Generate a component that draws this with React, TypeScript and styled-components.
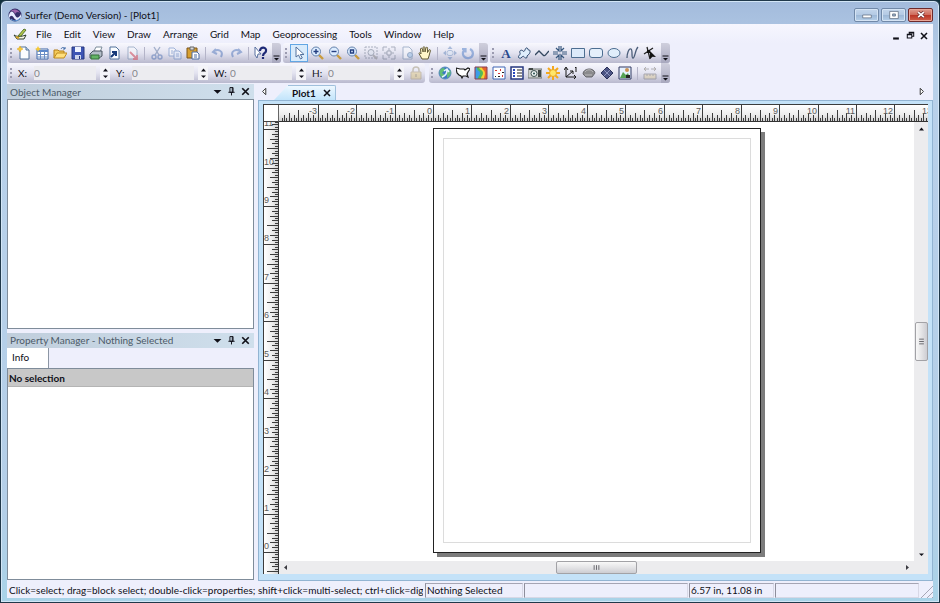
import React from "react";
import styled, { createGlobalStyle, css } from "styled-components";

const Global = createGlobalStyle`
  * { box-sizing: border-box; }
  html, body, #root { height: 100%; }
  body { margin: 0; overflow: hidden; background: #10303c; }
  body, button, input { font-family: Lato, "Open Sans", sans-serif; font-size: 10px; color: #101018; }
  button { border: 0; padding: 0; margin: 0; background: none; }
  svg { display: block; flex: none; }
`;

const Frame = styled.div`
  height: 100vh;
  display: flex;
  flex-direction: column;
  padding: 0 6px 4px;
  border: 1px solid #20384a;
  border-radius: 6px 6px 0 0;
  background: linear-gradient(#a3bbdc, #b9d1ea 70px, #b4cfe8 85%, #a9d3e8);
  box-shadow: inset 0 0 0 1px #d3e6f6;
`;
const TitleBar = styled.header`
  height: 23px;
  flex: none;
  display: flex;
  align-items: center;
  gap: 3px;
  padding: 5px 0 0 1px;
`;
const Title = styled.h1`
  margin: 0;
  flex: 1;
  font-size: 10px;
  line-height: 14px;
  font-weight: 400;
`;
const WindowButtons = styled.div`
  display: flex;
  gap: 2px;
`;
const WindowButton = styled.button<{ $close?: boolean }>`
  width: 25px;
  height: 14px;
  display: grid;
  place-items: center;
  border: 1px solid ${(p) => (p.$close ? "#6d2a2c" : "#7189a8")};
  border-radius: 2px;
  box-shadow: inset 0 0 0 1px ${(p) => (p.$close ? "#e9a799" : "#d5e4f4")};
  background: ${(p) =>
    p.$close
      ? "linear-gradient(#dd9c90, #cf6b5b 48%, #b93325 50%, #d0604a)"
      : "linear-gradient(#c3d6ec, #b4cae4 48%, #9cb7d6 50%, #b6d0ea)"};
`;
const Client = styled.div`
  flex: 1;
  min-height: 0;
  display: flex;
  flex-direction: column;
  background: #eeeffc;
`;
const MenuBar = styled.nav`
  height: 19px;
  flex: none;
  display: flex;
  align-items: center;
  padding: 0 3px 0 6px;
  background: linear-gradient(#f6f6fe, #eeeffc);
`;
const MenuList = styled.div`
  flex: 1;
  display: flex;
  gap: 12px;
  margin-left: 9px;
`;
const MenuItem = styled.button`
  line-height: 16px;
`;
const MdiButtons = styled.div`
  display: flex;
  gap: 2px;
  padding-top: 4px;
`;
const MdiButton = styled.button`
  width: 12px;
  height: 12px;
  display: grid;
  place-items: center;
`;

const ToolRow = styled.div<{ $gap: number }>`
  display: flex;
  flex: none;
  height: 20px;
  gap: ${(p) => p.$gap}px;
  padding-left: 1px;
`;
const ToolGroup = styled.div`
  display: flex;
  align-items: center;
  height: 20px;
  padding-left: 1px;
  border-radius: 3px;
  background: linear-gradient(#f8f8fe, #e3e3f0 50%, #b9b9ce);
`;
const Grip = styled.span`
  width: 6px;
  height: 12px;
  flex: none;
  background: radial-gradient(circle, #9b9bb0 1px, transparent 1px) 0 0 / 4px 4px repeat-y;
`;
const ToolButton = styled.button<{ $active?: boolean; $faded?: boolean }>`
  width: 18px;
  height: 18px;
  flex: none;
  display: grid;
  place-items: center;
  ${(p) => p.$active && css`background: #d9ebfb; box-shadow: inset 0 0 0 1px #62a6e4;`}
  svg { opacity: ${(p) => (p.$faded ? 0.45 : 1)}; }
`;
const Divider = styled.span`
  width: 1px;
  height: 13px;
  margin: 0 3px;
  flex: none;
  background: #b4b4c8;
`;
const Overflow = styled.button`
  width: 9px;
  height: 20px;
  margin-left: 2px;
  flex: none;
  display: flex;
  align-items: flex-end;
  justify-content: center;
  padding-bottom: 2px;
  border-radius: 0 3px 3px 0;
  background: linear-gradient(#cfcfdd, #a8a8be);
`;
const Coord = styled.label`
  display: flex;
  align-items: center;
  width: 98px;
  gap: 4px;
  padding: 0 3px;
  line-height: 14px;
`;
const CoordName = styled.span`
  width: 12px;
  flex: none;
`;
const CoordInput = styled.input`
  flex: 1;
  min-width: 0;
  height: 14px;
  border: 0;
  padding: 0;
  color: #84848c;
  background: #ececf0;
`;
const Spinner = styled.span`
  width: 10px;
  height: 14px;
  flex: none;
  display: flex;
  flex-direction: column;
  background: #f4f4f8;
`;
const SpinButton = styled.button`
  height: 7px;
  display: grid;
  place-items: center;
`;

const Workspace = styled.div`
  flex: 1;
  min-height: 0;
  display: grid;
  grid-template-columns: 247px minmax(0, 1fr);
  gap: 4px;
`;
const Sidebar = styled.aside`
  display: flex;
  flex-direction: column;
  gap: 4px;
  min-height: 0;
  padding: 1px 0;
`;
const Panel = styled.section<{ $grow: number }>`
  flex: ${(p) => p.$grow} 1 0;
  min-height: 0;
  display: flex;
  flex-direction: column;
`;
const PanelHeader = styled.div`
  height: 15px;
  flex: none;
  display: flex;
  align-items: center;
  padding: 0 2px 0 3px;
  background: linear-gradient(90deg, #c0cedc, #cfdfec);
`;
const PanelTitle = styled.h2`
  margin: 0;
  flex: 1;
  font-size: 10px;
  line-height: 14px;
  font-weight: 400;
  color: #4c5a68;
`;
const PanelButton = styled.button`
  width: 14px;
  height: 14px;
  display: grid;
  place-items: center;
`;
const PanelBody = styled.div`
  flex: 1;
  min-height: 0;
  background: #fff;
  border: 1px solid #7f8c9a;
`;
const PanelTabs = styled.div`
  height: 20px;
  flex: none;
  display: flex;
`;
const PanelTab = styled.button`
  width: 42px;
  padding: 0 0 1px 5px;
  text-align: left;
  background: #fff;
  border-right: 1px solid #8c96a4;
`;
const Selection = styled.p`
  margin: 0;
  height: 18px;
  padding-left: 1px;
  line-height: 18px;
  font-weight: 700;
  background: #c8c8c8;
  border-bottom: 1px solid #b4b4b4;
`;

const Documents = styled.main`
  min-width: 0;
  min-height: 0;
  display: flex;
  flex-direction: column;
`;
const TabStrip = styled.div`
  height: 17px;
  flex: none;
  display: flex;
  align-items: flex-end;
  justify-content: space-between;
  padding: 0 7px 0 2px;
`;
const TabGroup = styled.div`
  display: flex;
  align-items: flex-end;
  gap: 5px;
`;
const StripButton = styled.button`
  width: 9px;
  height: 17px;
  display: grid;
  place-items: center;
`;
const DocTab = styled.div`
  height: 15px;
  display: flex;
  align-items: center;
  gap: 4px;
  padding: 0 1px 0 4px;
  border-top: 1px solid #9fc0dc;
  border-right: 1px solid #9fc0dc;
  border-radius: 0 2px 0 0;
  background: linear-gradient(#eef8ff, #c2e4fb);
`;
const TabSlope = styled.span`
  width: 14px;
  height: 15px;
  margin-right: -5px;
  background: linear-gradient(#eef8ff, #c2e4fb);
  clip-path: polygon(100% 0, 100% 100%, 0 100%);
`;
const TabLabel = styled.button`
  font-weight: 700;
  line-height: 13px;
`;
const DocFrame = styled.div`
  flex: 1;
  min-height: 0;
  display: flex;
  padding: 3px 4px 6px;
  border: 1px solid #92b4d2;
  background: #c4e2f8;
`;
const Plot = styled.div`
  flex: 1;
  min-width: 0;
  display: grid;
  grid-template: 17px minmax(0, 1fr) 13px / 15px minmax(0, 1fr) 14px;
  border-top: 1px solid #3c3c3c;
  border-left: 1px solid #3c3c3c;
  background: #fff;
`;
const Corner = styled.div`
  border-right: 1px solid #666;
  border-bottom: 1px solid #444;
`;
const TopRuler = styled.div`
  grid-column: 2 / 4;
  overflow: hidden;
  background: linear-gradient(#fff, #ededed 60%, #d0d0d0);
  border-bottom: 1px solid #333;
`;
const SideRuler = styled.div`
  grid-row: 2 / 4;
  overflow: hidden;
  background: linear-gradient(90deg, #fff, #ededed 60%, #d0d0d0);
  border-right: 1px solid #333;
`;
const RulerArt = styled.svg`
  font: 9px "Liberation Sans", Arial, sans-serif;
  fill: #3c3c3c;
  text { fill: #5a5a5a; }
`;
const Canvas = styled.div`
  display: flex;
  justify-content: center;
  align-items: flex-start;
  overflow: hidden;
  padding-top: 6px;
`;
const Sheet = styled.div`
  width: 328px;
  height: 425px;
  flex: none;
  padding: 9px;
  border: 1px solid #222;
  background: #fff;
  box-shadow: 4px 4px 0 #7c7c7c;
`;
const Margins = styled.div`
  height: 100%;
  border: 1px solid #dcdcdc;
`;
const ScrollBar = styled.div<{ $horizontal?: boolean }>`
  display: flex;
  flex-direction: ${(p) => (p.$horizontal ? "row" : "column")};
  align-items: center;
  justify-content: space-between;
  background: #ececee;
`;
const ScrollEnd = styled.button`
  width: 13px;
  height: 13px;
  display: grid;
  place-items: center;
`;
const Thumb = styled.button<{ $horizontal?: boolean }>`
  width: ${(p) => (p.$horizontal ? 81 : 13)}px;
  height: ${(p) => (p.$horizontal ? 13 : 39)}px;
  display: grid;
  place-items: center;
  border: 1px solid #a2a2a6;
  border-radius: 2px;
  background: linear-gradient(${(p) => (p.$horizontal ? "180deg" : "90deg")}, #f8f8f8, #e4e4e6 50%, #cdcdd2);
`;

const StatusBar = styled.footer`
  height: 17px;
  flex: none;
  display: grid;
  grid-template-columns: 417px 98px minmax(0, 1fr) 85px 144px 13px;
  gap: 1px;
  padding-top: 2px;
`;
const StatusCell = styled.div<{ $plain?: boolean }>`
  padding-left: 1px;
  line-height: 13px;
  white-space: nowrap;
  overflow: hidden;
  border: 1px solid transparent;
  ${(p) => !p.$plain && css`border-color: #a5a5b4 #d8d8e6 #d8d8e6 #8e8e9c;`}
`;
const SizeGrip = styled.div`
  background: repeating-linear-gradient(135deg, transparent 0 3px, #a6a6b6 3px 4px);
  clip-path: polygon(100% 0, 100% 100%, 0 100%);
`;

const paper = <path d="M3 1h6l3 3v9H3z" fill="#fbfdff" stroke="#52739a" />;
const lens = (mark: React.ReactNode) => (
  <>
    <path d="m9 9 4 4" stroke="#c99b3d" strokeWidth="2.4" />
    <circle cx="6" cy="5.5" r="4.5" fill="#dcecff" stroke="#6482ab" />
    <g stroke="#243f80" strokeWidth="1.4" fill="none">{mark}</g>
  </>
);

const art: Record<string, React.ReactNode> = {
  new: <>{paper}<path d="M9 1v3h3" fill="#c7daf0" stroke="#52739a" /><path d="m3 0 1 2 2 1-2 1-1 2-1-2-2-1 2-1z" fill="#f6c936" stroke="#e2a51a" strokeWidth=".5" /></>,
  sheet: <><path d="M2 3h11v10H2z" fill="#fff" stroke="#3e66a8" /><path d="M2 4h11v2H2z" fill="#5b87cb" /><path d="M2 8.500h11M2 11h11M5.500 5v8M9.500 5v8" stroke="#6a8dc4" /><path d="m3 0 1 2 2 1-2 1-1 2-1-2-2-1 2-1z" fill="#f6c936" /></>,
  open: <><path d="M1 12V4h4l1 1h5v3" fill="#f4cb5a" stroke="#b47f17" /><path d="m1 12 3-5h10l-3 5z" fill="#ffdf7c" stroke="#c08b1d" /><path d="M8 3c1-2 3-2 4 0m0-2v2h-2" stroke="#3c68a6" fill="none" /></>,
  save: <><path d="M1 1h12v12H1z" fill="#3d55b4" stroke="#26377f" /><path d="M4 1h6v5H4z" fill="#eef3ff" /><path d="M4 9h6v4H4z" fill="#cdd5ec" /><path d="M8 10h1v3H8z" fill="#26377f" /></>,
  print: <><path d="m5 5 2-4h6l-2 5z" fill="#fff" stroke="#7b8b99" /><path d="M1 8 4 5h9v5l-3 2H1z" fill="#b3bec8" stroke="#4a5560" /><path d="M2 9h8v4H2z" fill="#63b465" stroke="#34703a" /></>,
  export: <>{paper}<path d="M4 11 9 6m-4 0h4v4" stroke="#173a78" strokeWidth="2" fill="none" /></>,
  drop: <>{paper}<path d="m5 6 7 7m0-4v4H8" stroke="#d42f3d" strokeWidth="1.800" fill="none" /></>,
  cut: <><path d="M4 1 9 9M10 1 5 9" stroke="#4a6797" strokeWidth="1.400" /><circle cx="4" cy="11" r="2" fill="none" stroke="#3f66ad" strokeWidth="1.400" /><circle cx="10" cy="11" r="2" fill="none" stroke="#3f66ad" strokeWidth="1.400" /></>,
  copy: <><path d="M1 2h5l2 2v6H1z" fill="#fff" stroke="#4470b6" /><path d="M6 5h5l2 2v6H6z" fill="#e5efff" stroke="#4470b6" /><path d="M8 8h3M8 10h3M3 5h2M3 7h2" stroke="#4470b6" /></>,
  paste: <><path d="M1 2h10v10H1z" fill="#d8a030" stroke="#7c5518" /><path d="M4 1h4v3H4z" fill="#d8d8d8" stroke="#666" /><path d="M6 6h5l2 2v5H6z" fill="#fff" stroke="#4c6da3" /><path d="M8 9h3M8 11h3" stroke="#4c6da3" /></>,
  undo: <path d="M5 3 2 6l4 2M2 6c5-4 11-1 8 5" stroke="#3e68b4" strokeWidth="2" fill="none" />,
  redo: <path d="m9 3 3 3-4 2m4-2C7 2 1 5 4 11" stroke="#3e68b4" strokeWidth="2" fill="none" />,
  help: <><path d="m1 1 6 7H4l-1 4-2-3z" fill="#fff" stroke="#5870a0" /><path d="M6 5c0-5 7-4 6 0 0 2-3 2-3 5m0 1v2" stroke="#1d2976" strokeWidth="2.200" fill="none" /></>,
  arrow: <path d="M4 1v10l2.500-2 2 4 1.800-1-2-3.500H12z" fill="#fff" stroke="#52709c" />,
  zoomIn: lens(<path d="M3.500 5.500h5M6 3v5" />),
  zoomOut: lens(<path d="M3.500 5.500h5" />),
  zoomFit: lens(<path d="M4.500 4h3v3h-3z" />),
  zoomSel: <><path d="M1 1h12v11H1z" fill="none" stroke="#586478" strokeDasharray="2 1" /><path d="m9 9 4 4" stroke="#777" strokeWidth="2" /><circle cx="7" cy="6.500" r="3" fill="#d9e1ec" stroke="#586478" /></>,
  zoomRect: <path d="M1 5V1h4M9 1h4v4M13 9v4H9M5 13H1V9M7 2v3M7 9v3M2 7h3m4 0h3M5 5h4v4H5z" fill="none" stroke="#586478" />,
  zoomPage: <>{paper}<circle cx="10" cy="9" r="2.500" fill="#8fbde8" stroke="#3d6896" /></>,
  hand: <path d="M4 13 1 7.500c0-1 1-1 2 .500L2.500 3c0-1 1.500-1 2 0l.6 3V1.500c0-1 1.700-1 1.800 0L7 6l1-4.200c.3-1 1.800-.6 1.600.4L9.500 6.500 11 4c.6-.8 1.800-.2 1.400.8L11 10l-1 3z" fill="#fff6c9" stroke="#625a34" />,
  move: <><path d="m7 0 2.500 3h-5zM7 14l2.500-3h-5zM0 7l3-2.500v5zM14 7l-3-2.500v5z" fill="#587eb6" /><rect x="4" y="4.500" width="6" height="5" rx="2" fill="#d9e6f5" stroke="#6a8cbd" /></>,
  rotate: <path d="M3 4c-3 5 1 9 5 8 5-1 5-7 1-9M1 3h3.500v3.500" stroke="#3d71c2" strokeWidth="2.200" fill="none" />,
  text: <text x="7" y="12" textAnchor="middle" fontFamily="Liberation Serif, serif" fontWeight="700" fontSize="13" fill="#29488c">A</text>,
  polygon: <path d="M2 12c-2-2 2-3 1-5s1-4 3-2 2-4 4-3 0 2 2 2 1 4-1 5 0 3-2 3-2-3-4-1-2 1-3 1z" fill="#dfeefc" stroke="#2a456c" />,
  polyline: <path d="m0 9 4-4 4 4c2 2 3-1 6-4" stroke="#33475f" strokeWidth="1.300" fill="none" />,
  symbol: <path d="M6 0v5L3 2M8 0v5l3-3M6 14V9l-3 3M8 14V9l3 3M0 6h5M0 8h5M9 6h5M9 8h5" stroke="#38587e" strokeWidth="1.200" fill="none" />,
  rect: <path d="M.5 2.500h13v9H.5z" fill="#dceafa" stroke="#4d6e91" />,
  rounded: <rect x=".5" y="2.500" width="13" height="9" rx="2.500" fill="#e4effb" stroke="#4d6e91" />,
  ellipse: <ellipse cx="7" cy="7" rx="6" ry="4.500" fill="#e0eefb" stroke="#4d6e91" />,
  spline: <path d="M2 12c0-5 2-10 4-9s0 9 2 9 2-8 5-11" stroke="#4b5d79" strokeWidth="1.300" fill="none" />,
  reshape: <><path d="M1 8 10 2M4 1l3 12" stroke="#222" strokeWidth="1.300" /><path d="M4 4h3v3H4z" fill="#111" /><path d="m7 5 6 6-3.500-.3L7 13z" fill="#111" /></>,
  lock: <><path d="M4 7V4c0-4 6-4 6 0v3" stroke="#988d6a" strokeWidth="1.500" fill="none" /><path d="M2 6h10v7H2z" fill="#e2c877" stroke="#a6936a" /><path d="M7 8v3" stroke="#70603a" /></>,
  globe: <><circle cx="7" cy="7" r="6" fill="#3a78c4" stroke="#5a8cbe" /><path d="M2 4c3-3 5-2 5 0L4 7l3 2-2 3C2 11 1 7 2 4zM9 5l3-1c2 4-1 7-3 8z" fill="#61bd77" /><path d="M4 11c3-1 5-4 5-7M6 5l3-2 2 3" stroke="#e5f5ff" fill="none" strokeWidth="1.500" /></>,
  base: <path d="m0 2 4 1h4l1 1 3-2 2 1-2 3-1 2 1 3-2-1-3 0-1 2-1-2-2-1-2-2z" fill="#fff" stroke="#181818" strokeWidth="1.200" />,
  contour: <><path d="M1 1h12v12H1z" fill="#3c9ce8" /><path d="M3 1c0 5 3 3 3 6s-2 3-2 6h9V1z" fill="#54b85a" /><path d="M5 1c0 3 4 3 4 6s-2 3-2 6h6V1z" fill="#f5d232" /><path d="M8 1c0 3 3 3 3 6s-1 3-1 6h3V1z" fill="#e8642c" /><path d="M1 1h12v12H1z" fill="none" stroke="#8a3c50" /></>,
  post: <><path d="M1 1h12v12H1z" fill="#fff" stroke="#3f64b4" /><path d="M3 4h2v1H3zM8 3h1v2H8zM6 7h2v1H6zM10 9h1v2h-1z" fill="#d83434" /><path d="M3 10h1v1H3zM10 6h2v1h-2zM6 10h2v1H6z" fill="#222" /></>,
  legend: <><path d="M1 1h12v12H1z" fill="#fff" stroke="#26377f" strokeWidth="1.500" /><path d="M3 3h2v2H3zM3 6h2v2H3zM3 9h2v2H3z" fill="#2746be" /><path d="M7 4h5M7 7h5M7 10h5" stroke="#222" /></>,
  camera: <><path d="M0 3h14v9H0z" fill="#ced1cf" stroke="#717675" /><path d="M1 2h4v2H1zM10 4h3v7h-3z" fill="#414846" /><circle cx="6" cy="7.500" r="3" fill="#eef4f2" stroke="#3d5150" /><circle cx="6" cy="7.500" r="1" fill="#27504d" /></>,
  relief: <><path d="M7 0v14M0 7h14M2 2l10 10M12 2 2 12" stroke="#f5a91d" strokeWidth="2" /><circle cx="7" cy="7" r="3.500" fill="#ffe66a" stroke="#eaa51e" /></>,
  vector: <path d="M2 2v9h10M0 4l2-3 2 3M10 9l2 2-2 2M2 11l7-6M6 5h3v3M11 2l1-1v5" stroke="#181818" fill="none" />,
  surface: <><path d="M1 8c0-6 11-7 12-1l-3 4H4z" fill="#8b8b8d" stroke="#68686e" /><path d="M3 6c2-3 6-3 8 0M3 9h7" stroke="#b8b8ba" fill="none" /></>,
  wireframe: <><path d="m7 1 6 6-6 6-6-6z" fill="#4c5484" stroke="#2a3158" /><path d="m4 4 6 6M10 4l-6 6" stroke="#8e96c0" /></>,
  image: <><path d="M1 1h12v12H1z" fill="#e6f1fd" stroke="#333b62" /><path d="m2 12 3-6 3 3 2-2 2 5z" fill="#55a255" /><circle cx="9" cy="4" r="2" fill="#ca9256" /><path d="M8 9h4v3H8z" fill="#252525" /></>,
  scale: <path d="M1 3h5M8 3h5M3 1 1 3l2 2M11 1l2 2-2 2M1 8h12v5H1zM4 8v2M7 8v2M10 8v2" fill="#e2cf9c" stroke="#69696d" />,
  logo: <><circle cx="7" cy="7" r="6.500" fill="#352f69" /><path d="M1 7c2-5 4-4 6 0s4 3 6-1v3c-2 4-5 4-7 1S3 7 1 10z" fill="#e7ebff" /><path d="M2 4c3-4 8-3 10 1-2-2-4-1-5 1-1-3-3-4-5-2z" fill="#9c63aa" /><path d="M3 11c3 3 7 2 9-1" stroke="#5fa0de" fill="none" /></>,
  plot: <><path d="M1 8c4 2 6 2 12 0l-2 4H4z" fill="#f6f6e6" stroke="#2d3b2c" /><path d="m5 9 6-7 2 1-5 6z" fill="#b5c94a" stroke="#58752e" /><path d="m3 10 3 1" stroke="#d7a52c" strokeWidth="2" /></>,
  close: <path d="m3.500 3.500 7 7m0-7-7 7" stroke="#101018" strokeWidth="1.800" />,
  pin: <path d="M5 2h4v6H5zM3 8h8M7 8v4M8 2v6" stroke="#101018" strokeWidth="1.200" fill="none" />,
  down: <path d="M2 5h10L7 10z" fill="#101018" />,
  minimize: <path d="M3 10.500h8" stroke="#101018" strokeWidth="3" />,
  restore: <path d="M5 5V2h7v6H9M5 3h7M2 5h7v6H2zM2 6h7" fill="none" stroke="#101018" strokeWidth="1.600" />,
  left: <path d="M9 2v10L4 7z" fill="#fff" stroke="#333" strokeWidth="1.500" />,
  right: <path d="M5 2v10l5-5z" fill="#fff" stroke="#333" strokeWidth="1.500" />,
  overflow: <path d="M1 3h12v2H1zM2 8h10l-5 5z" fill="#101018" />,
  up: <path d="M2 11h10L7 5z" fill="#101018" />,
  scrollLeft: <path d="M10 2v10L4 7z" fill="#3a3a40" />,
  scrollRight: <path d="M4 2v10l6-5z" fill="#3a3a40" />,
  winMin: <path d="M1 7h12v4H1z" fill="#fff" stroke="#59677b" />,
  winMax: <><path d="M1 2h12v10H1z" fill="#fff" stroke="#59677b" /><path d="M5 5.500h4v3H5z" fill="#9db4cf" stroke="#59677b" /></>,
  winClose: <><path d="m3 3 8 7m0-7-8 7" stroke="#5a2427" strokeWidth="4" /><path d="m3 3 8 7m0-7-8 7" stroke="#fff" strokeWidth="2.400" /></>,
  bars: <path d="M4 4v6M7 4v6M10 4v6" stroke="#4a4a50" />,
  rows: <path d="M4 4h6M4 7h6M4 10h6" stroke="#4a4a50" />,
};

function Icon({ name, size = 14 }: { name: string; size?: number }) {
  return <svg width={size} height={size} viewBox="0 0 14 14" aria-hidden="true">{art[name]}</svg>;
}

type Tools = { tools: string[]; faded?: string[]; active?: string };

function ToolSet({ tools, faded = [], active }: Tools) {
  return (
    <>
      {tools.map((name, i) =>
        name === "|" ? (
          <Divider key={i} />
        ) : (
          <ToolButton key={i} aria-label={name} $active={name === active} $faded={faded.includes(name)}>
            <Icon name={name} />
          </ToolButton>
        )
      )}
    </>
  );
}

function Toolbar(props: Tools) {
  return (
    <ToolGroup role="toolbar">
      <Grip />
      <ToolSet {...props} />
      <Overflow aria-label="Toolbar options"><Icon name="overflow" size={7} /></Overflow>
    </ToolGroup>
  );
}

function CoordField({ name }: { name: string }) {
  return (
    <Coord>
      <CoordName>{name}:</CoordName>
      <CoordInput defaultValue="0" />
      <Spinner>
        <SpinButton type="button" aria-label={`Increase ${name}`}><Icon name="up" size={7} /></SpinButton>
        <SpinButton type="button" aria-label={`Decrease ${name}`}><Icon name="down" size={7} /></SpinButton>
      </Spinner>
    </Coord>
  );
}

const INCH = 38.45;
const TICKS = 16;
const ORIGIN_X = 154;
const ORIGIN_Y = 430;

function tickLength(step: number) {
  if (step % 16 === 0) return 16;
  if (step % 8 === 0) return 11;
  if (step % 4 === 0) return 8;
  return step % 2 === 0 ? 6 : 3;
}
const range = (from: number, to: number) => Array.from({ length: to - from + 1 }, (_, i) => from + i);

function HorizontalRuler() {
  return (
    <RulerArt width="100%" height="16">
      {range(-63, 640).map((s) => (
        <rect key={s} x={Math.round(ORIGIN_X + (s * INCH) / TICKS)} y={16 - tickLength(s)} width="1" height={tickLength(s)} />
      ))}
      {range(-3, 13).map((n) => (
        <text key={n} x={Math.round(ORIGIN_X + n * INCH) - 1} y="9" textAnchor="end">{n}</text>
      ))}
    </RulerArt>
  );
}

function VerticalRuler() {
  return (
    <RulerArt width="14" height="100%">
      {range(-160, 179).map((s) => (
        <rect key={s} x={14 - tickLength(s)} y={Math.round(ORIGIN_Y - (s * INCH) / TICKS)} width={tickLength(s)} height="1" />
      ))}
      {range(0, 11).map((n) => (
        <text key={n} x="0" y={Math.round(ORIGIN_Y - n * INCH) - 3}>{n}</text>
      ))}
    </RulerArt>
  );
}

function PanelHead({ title }: { title: string }) {
  return (
    <PanelHeader>
      <PanelTitle>{title}</PanelTitle>
      <PanelButton aria-label="Panel menu"><Icon name="down" size={11} /></PanelButton>
      <PanelButton aria-label="Auto hide"><Icon name="pin" size={11} /></PanelButton>
      <PanelButton aria-label="Close panel"><Icon name="close" size={13} /></PanelButton>
    </PanelHeader>
  );
}

const menus = ["File", "Edit", "View", "Draw", "Arrange", "Grid", "Map", "Geoprocessing", "Tools", "Window", "Help"];

export default function App() {
  return (
    <>
      <Global />
      <Frame>
        <TitleBar>
          <Icon name="logo" />
          <Title>Surfer (Demo Version) - [Plot1]</Title>
          <WindowButtons>
            <WindowButton aria-label="Minimize"><Icon name="winMin" size={10} /></WindowButton>
            <WindowButton aria-label="Restore"><Icon name="winMax" size={10} /></WindowButton>
            <WindowButton aria-label="Close" $close><Icon name="winClose" size={10} /></WindowButton>
          </WindowButtons>
        </TitleBar>
        <Client>
          <MenuBar>
            <Icon name="plot" />
            <MenuList>
              {menus.map((m) => <MenuItem key={m}>{m}</MenuItem>)}
            </MenuList>
            <MdiButtons>
              <MdiButton aria-label="Minimize document"><Icon name="minimize" size={10} /></MdiButton>
              <MdiButton aria-label="Restore document"><Icon name="restore" size={9} /></MdiButton>
              <MdiButton aria-label="Close document"><Icon name="close" size={12} /></MdiButton>
            </MdiButtons>
          </MenuBar>
          <ToolRow $gap={2}>
            <Toolbar
              tools={["new", "sheet", "open", "save", "print", "export", "drop", "|", "cut", "copy", "paste", "|", "undo", "redo", "|", "help"]}
              faded={["drop", "cut", "copy", "undo", "redo"]}
            />
            <Toolbar
              tools={["arrow", "zoomIn", "zoomOut", "zoomFit", "zoomSel", "zoomRect", "zoomPage", "hand", "|", "move", "rotate"]}
              faded={["zoomSel", "zoomRect", "zoomPage", "move", "rotate"]}
              active="arrow"
            />
            <Toolbar tools={["text", "polygon", "polyline", "symbol", "rect", "rounded", "ellipse", "spline", "reshape"]} />
          </ToolRow>
          <ToolRow $gap={4}>
            <ToolGroup role="toolbar">
              <Grip />
              {["X", "Y", "W", "H"].map((n) => <CoordField key={n} name={n} />)}
              <ToolSet tools={["lock"]} faded={["lock"]} />
            </ToolGroup>
            <Toolbar
              tools={["globe", "base", "contour", "post", "legend", "camera", "relief", "vector", "surface", "wireframe", "image", "|", "scale"]}
              faded={["scale"]}
            />
          </ToolRow>
          <Workspace>
            <Sidebar>
              <Panel $grow={245}>
                <PanelHead title="Object Manager" />
                <PanelBody />
              </Panel>
              <Panel $grow={248}>
                <PanelHead title="Property Manager - Nothing Selected" />
                <PanelTabs role="tablist"><PanelTab role="tab" aria-selected="true">Info</PanelTab></PanelTabs>
                <PanelBody><Selection>No selection</Selection></PanelBody>
              </Panel>
            </Sidebar>
            <Documents>
              <TabStrip>
                <TabGroup>
                  <StripButton aria-label="Previous tab"><Icon name="left" size={9} /></StripButton>
                  <TabSlope />
                  <DocTab>
                    <TabLabel>Plot1</TabLabel>
                    <PanelButton aria-label="Close Plot1"><Icon name="close" size={12} /></PanelButton>
                  </DocTab>
                </TabGroup>
                <StripButton aria-label="Next tab"><Icon name="right" size={9} /></StripButton>
              </TabStrip>
              <DocFrame>
                <Plot>
                  <Corner />
                  <TopRuler><HorizontalRuler /></TopRuler>
                  <SideRuler><VerticalRuler /></SideRuler>
                  <Canvas><Sheet><Margins /></Sheet></Canvas>
                  <ScrollBar>
                    <ScrollEnd aria-label="Scroll up"><Icon name="up" size={7} /></ScrollEnd>
                    <Thumb aria-label="Vertical scroll"><Icon name="rows" size={11} /></Thumb>
                    <ScrollEnd aria-label="Scroll down"><Icon name="down" size={7} /></ScrollEnd>
                  </ScrollBar>
                  <ScrollBar $horizontal>
                    <ScrollEnd aria-label="Scroll left"><Icon name="scrollLeft" size={7} /></ScrollEnd>
                    <Thumb $horizontal aria-label="Horizontal scroll"><Icon name="bars" size={11} /></Thumb>
                    <ScrollEnd aria-label="Scroll right"><Icon name="scrollRight" size={7} /></ScrollEnd>
                  </ScrollBar>
                  <ScrollBar />
                </Plot>
              </DocFrame>
            </Documents>
          </Workspace>
          <StatusBar>
            <StatusCell $plain>Click=select; drag=block select; double-click=properties; shift+click=multi-select; ctrl+click=dig</StatusCell>
            <StatusCell>Nothing Selected</StatusCell>
            <StatusCell />
            <StatusCell>6.57 in, 11.08 in</StatusCell>
            <StatusCell />
            <SizeGrip />
          </StatusBar>
        </Client>
      </Frame>
    </>
  );
}
